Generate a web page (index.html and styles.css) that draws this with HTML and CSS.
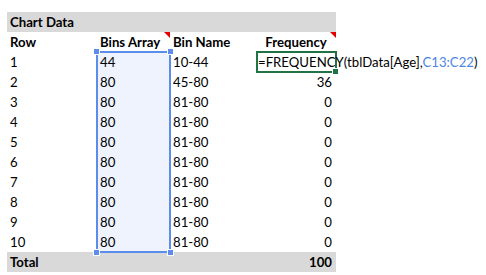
FILE: index.html
```html
<!DOCTYPE html>
<html>
<head>
<meta charset="utf-8">
<link rel="stylesheet" href="styles.css">
</head>
<body>
<div class="sheet">
  <div class="row band"><div class="c a b">Chart Data</div><div class="c"></div><div class="c"></div><div class="c"></div></div>
  <div class="row head"><div class="c a">Row</div><div class="c note">Bins Array</div><div class="c">Bin Name</div><div class="c d ctr note">Frequency</div></div>
  <div class="row"><div class="c a">1</div><div class="c sel">44</div><div class="c">10-44</div><div class="c d formula">=FREQUENCY(tblData[Age],<span class="ref">C13:C22</span>)</div></div>
  <div class="row"><div class="c a">2</div><div class="c sel">80</div><div class="c">45-80</div><div class="c d num">36</div></div>
  <div class="row"><div class="c a">3</div><div class="c sel">80</div><div class="c">81-80</div><div class="c d num">0</div></div>
  <div class="row"><div class="c a">4</div><div class="c sel">80</div><div class="c">81-80</div><div class="c d num">0</div></div>
  <div class="row"><div class="c a">5</div><div class="c sel">80</div><div class="c">81-80</div><div class="c d num">0</div></div>
  <div class="row"><div class="c a">6</div><div class="c sel">80</div><div class="c">81-80</div><div class="c d num">0</div></div>
  <div class="row"><div class="c a">7</div><div class="c sel">80</div><div class="c">81-80</div><div class="c d num">0</div></div>
  <div class="row"><div class="c a">8</div><div class="c sel">80</div><div class="c">81-80</div><div class="c d num">0</div></div>
  <div class="row"><div class="c a">9</div><div class="c sel">80</div><div class="c">81-80</div><div class="c d num">0</div></div>
  <div class="row"><div class="c a">10</div><div class="c sel">80</div><div class="c">81-80</div><div class="c d num">0</div></div>
  <div class="row band total"><div class="c a">Total</div><div class="c"></div><div class="c"></div><div class="c d num">100</div></div>

  <div class="selection">
    <span class="h tl"></span><span class="h tr"></span><span class="h bl"></span><span class="h br"></span>
  </div>
  <div class="active"><span class="fill"></span></div>
</div>
</body>
</html>
```

FILE: styles.css
```css
html, body {
  margin: 0;
  padding: 0;
  background: #fff;
}
body {
  padding: 12px 0 0 7px;
  font-family: Lato, "Open Sans", sans-serif;
  font-size: 13.2px;
  color: #000;
}
.sheet {
  position: relative;
  width: 329px;
}
.row {
  display: grid;
  grid-template-columns: 90px 73px 86px 80px;
  height: 20px;
}
.c {
  position: relative;
  padding: 0 3px;
  line-height: 21px;
  white-space: nowrap;
}
.band {
  background: #d9d9d9;
  font-weight: bold;
}
.head {
  font-weight: bold;
}
.ctr {
  text-align: center;
}
.num {
  text-align: right;
  padding-right: 4px;
}
.sel {
  background: #eef3fd;
}
.note::after {
  content: "";
  position: absolute;
  top: 0;
  right: 0;
  border-top: 6px solid #e00000;
  border-left: 6px solid transparent;
}
.formula {
  overflow: visible;
  padding-left: 2px;
  z-index: 3;
}
.ref {
  color: #4d86e6;
}
.selection {
  position: absolute;
  left: 89px;
  top: 39px;
  width: 71px;
  height: 198px;
  border: 2px solid #5b8ded;
}
.h {
  position: absolute;
  width: 5px;
  height: 5px;
  background: #5b8ded;
  border: 1px solid #fff;
}
.tl { left: -5px; top: -5px; }
.tr { right: -5px; top: -5px; }
.bl { left: -5px; bottom: -5px; }
.br { right: -5px; bottom: -5px; }
.active {
  position: absolute;
  left: 249px;
  top: 39px;
  width: 77px;
  height: 18px;
  border: 2px solid #217346;
  z-index: 2;
}
.fill {
  position: absolute;
  right: -4px;
  bottom: -4px;
  width: 5px;
  height: 5px;
  background: #217346;
  border: 1px solid #fff;
}
```
